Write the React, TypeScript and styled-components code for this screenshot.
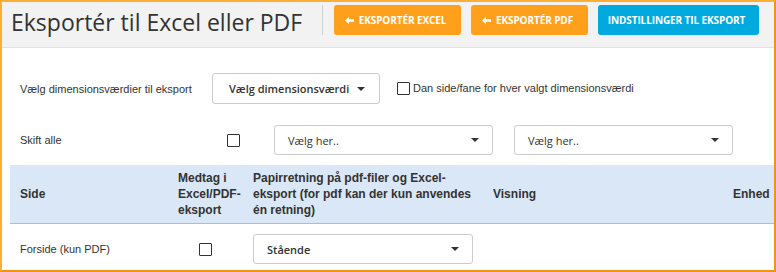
import styled, { createGlobalStyle } from "styled-components";

const GlobalStyle = createGlobalStyle`
  html, body {
    margin: 0;
    padding: 0;
    background: #ffffff;
  }
  * {
    box-sizing: border-box;
  }
`;

const columns = "158px 75px 240px 240px 1fr";

export default function App() {
  return (
    <>
      <GlobalStyle />
      <Frame>
        <Header>
          <Title>Eksportér til Excel eller PDF</Title>
          <Separator />
          <ButtonGroup>
            <ActionButton $color="#ffa01c" $width={127}>
              <ArrowIcon />
              Eksportér Excel
            </ActionButton>
            <ActionButton $color="#ffa01c" $width={117}>
              <ArrowIcon />
              Eksportér PDF
            </ActionButton>
            <ActionButton $color="#00aadf" $width={161}>
              Indstillinger til eksport
            </ActionButton>
          </ButtonGroup>
        </Header>

        <Content>
          <DimensionRow>
            <Label $width={192}>Vælg dimensionsværdier til eksport</Label>
            <DropdownButton>
              Vælg dimensionsværdi
              <Caret />
            </DropdownButton>
            <CheckLabel>
              <CheckBox type="checkbox" />
              Dan side/fane for hver valgt dimensionsværdi
            </CheckLabel>
          </DimensionRow>

          <ToggleRow>
            <Label $width={207}>Skift alle</Label>
            <CheckBox type="checkbox" />
            <Select $width={219} $gap={34}>
              <span>Vælg her..</span>
              <Caret />
            </Select>
            <Select $width={219} $gap={21}>
              <span>Vælg her..</span>
              <Caret />
            </Select>
          </ToggleRow>

          <Table>
            <HeadRow>
              <HeadCell>Side</HeadCell>
              <HeadCell>Medtag i Excel/PDF-eksport</HeadCell>
              <HeadCell>
                Papirretning på pdf-filer og Excel-eksport (for pdf kan der kun
                anvendes én retning)
              </HeadCell>
              <HeadCell>Visning</HeadCell>
              <HeadCell>Enhed</HeadCell>
            </HeadRow>
            <BodyRow>
              <BodyCell>Forside (kun PDF)</BodyCell>
              <CenterCell>
                <CheckBox type="checkbox" />
              </CenterCell>
              <BodyCell>
                <Select $width={220} $bold>
                  <span>Stående</span>
                  <Caret />
                </Select>
              </BodyCell>
              <BodyCell />
              <BodyCell />
            </BodyRow>
          </Table>
        </Content>
      </Frame>
    </>
  );
}

function ArrowIcon() {
  return (
    <ArrowSvg width="9" height="7" viewBox="0 0 9 7">
      <path d="M0 3.5 L4 0 V2.2 H9 V4.8 H4 V7 Z" fill="#ffffff" />
    </ArrowSvg>
  );
}

const Frame = styled.div`
  width: 776px;
  height: 272px;
  overflow: hidden;
  border-top: 2px solid #fcae35;
  border-left: 2px solid #fcae35;
  border-right: 2px solid #f29410;
  border-bottom: 2px solid #f29410;
  background: #ffffff;
`;

const Header = styled.div`
  display: flex;
  align-items: flex-start;
  height: 46px;
  padding: 3px 15px 0 9px;
  background: #f2f2f2;
  border-bottom: 1px solid #e2e2e2;
`;

const Title = styled.h1`
  margin: 0;
  padding-top: 3px;
  font-family: "Open Sans", sans-serif;
  font-weight: 400;
  font-size: 23px;
  line-height: 28px;
  color: #333333;
  white-space: nowrap;
`;

const Separator = styled.div`
  width: 1px;
  height: 30px;
  margin: 0 11px 0 auto;
  background: #d0d0d0;
`;

const ButtonGroup = styled.div`
  display: flex;
  gap: 10px;
`;

const ActionButton = styled.button<{ $color: string; $width: number }>`
  display: flex;
  align-items: center;
  justify-content: center;
  width: ${(p) => p.$width}px;
  height: 30px;
  padding: 0 4px 0 0;
  border: none;
  border-radius: 3px;
  background: ${(p) => p.$color};
  color: #ffffff;
  font-family: "Open Sans", sans-serif;
  font-weight: 700;
  font-size: 10px;
  letter-spacing: -0.1px;
  text-transform: uppercase;
  white-space: nowrap;
  cursor: pointer;
`;

const ArrowSvg = styled.svg`
  margin-right: 5px;
  flex-shrink: 0;
`;

const Content = styled.div`
  padding: 25px 0 0 8px;
`;

const DimensionRow = styled.div`
  display: flex;
  align-items: center;
  padding-left: 10px;
  height: 31px;
`;

const ToggleRow = styled.div`
  display: flex;
  align-items: center;
  padding-left: 10px;
  height: 30px;
  margin-top: 21px;
`;

const Label = styled.div<{ $width: number }>`
  width: ${(p) => p.$width}px;
  flex-shrink: 0;
  font-family: "Liberation Sans", Arial, sans-serif;
  font-size: 11px;
  color: #333333;
`;

const DropdownButton = styled.button`
  display: flex;
  align-items: center;
  gap: 8px;
  width: 168px;
  height: 31px;
  padding: 0 16px;
  border: 1px solid #cccccc;
  border-radius: 3px;
  background: #ffffff;
  font-family: "Open Sans", sans-serif;
  font-weight: 600;
  font-size: 11px;
  color: #333333;
  white-space: nowrap;
`;

const Caret = styled.span`
  width: 0;
  height: 0;
  border-left: 4px solid transparent;
  border-right: 4px solid transparent;
  border-top: 4px solid #333333;
  flex-shrink: 0;
`;

const CheckLabel = styled.label`
  display: flex;
  align-items: center;
  gap: 3px;
  margin-left: 17px;
  margin-top: -1px;
  font-family: "Liberation Sans", Arial, sans-serif;
  font-size: 11px;
  color: #333333;
`;

const CheckBox = styled.input`
  appearance: none;
  width: 13px;
  height: 13px;
  margin: 0;
  border: 1px solid #333333;
  border-radius: 1px;
  background: #ffffff;
  flex-shrink: 0;
`;

const Select = styled.div<{ $width: number; $gap?: number; $bold?: boolean }>`
  display: flex;
  align-items: center;
  justify-content: space-between;
  width: ${(p) => p.$width}px;
  height: 30px;
  margin-left: ${(p) => p.$gap ?? 0}px;
  padding: 0 13px;
  border: 1px solid #cccccc;
  border-radius: 3px;
  background: #ffffff;
  font-family: "Open Sans", sans-serif;
  font-weight: ${(p) => (p.$bold ? 600 : 400)};
  font-size: 11px;
  color: #333333;
`;

const Table = styled.div`
  margin-top: 10px;
`;

const HeadRow = styled.div`
  display: grid;
  grid-template-columns: ${columns};
  align-items: center;
  height: 59px;
  background: #dae7f6;
  border-bottom: 1px solid #92c5e6;
`;

const HeadCell = styled.div`
  padding-left: 10px;
  font-family: "Liberation Sans", Arial, sans-serif;
  font-weight: 700;
  font-size: 12px;
  line-height: 16px;
  color: #333333;
`;

const BodyRow = styled.div`
  display: grid;
  grid-template-columns: ${columns};
  align-items: center;
  padding-top: 10px;
`;

const BodyCell = styled.div`
  padding-left: 10px;
  font-family: "Liberation Sans", Arial, sans-serif;
  font-size: 11px;
  color: #333333;
`;

const CenterCell = styled.div`
  display: flex;
  justify-content: center;
`;
